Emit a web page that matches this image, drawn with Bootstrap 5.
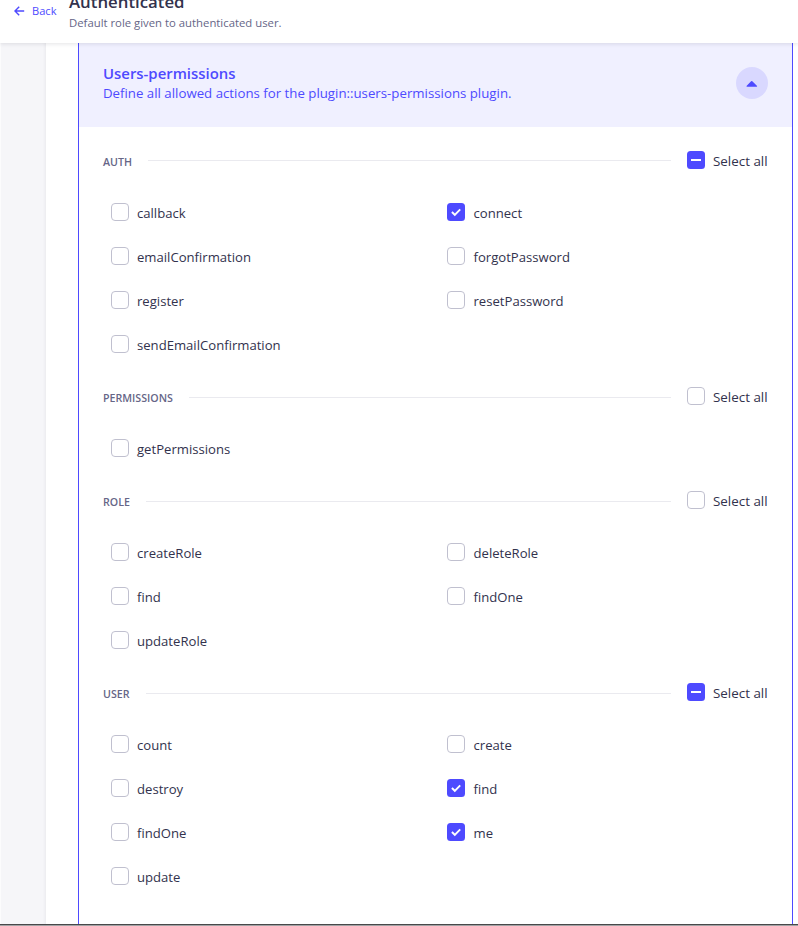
<!DOCTYPE html>
<html lang="en">
<head>
<meta charset="utf-8">
<meta name="viewport" content="width=device-width, initial-scale=1">
<title>Authenticated role</title>
<link href="https://cdn.jsdelivr.net/npm/bootstrap@5.3.0/dist/css/bootstrap.min.css" rel="stylesheet">
<style>
  :root { --brand: #4e4aff; --ink: #32324d; --muted-ink: #666687; }
  body { font-family: "Open Sans", "Noto Sans", sans-serif; color: var(--ink); font-size: 13.12px; line-height: 20px; }
  .screen { height: 926px; }
  .top-bar { height: 43px; box-shadow: 0 1px 4px rgba(33,33,52,.12); z-index: 2; padding-left: 14px; }
  .back-link { color: var(--brand); font-size: 11.1px; line-height: 16px; height: 16px; margin-top: 3px; gap: 7px; width: 55px; }
  .page-title { font-size: 16.8px; line-height: 22px; font-weight: 600; margin-top: -9px; margin-bottom: 2px; }
  .subtitle { font-size: 11.34px; line-height: 16px; color: var(--muted-ink); }
  .side-strip { width: 46px; background: #f6f6f9; border-left: 1px solid #fcfcfd; box-shadow: inset -3px 0 3px -2px rgba(33,33,52,.06); }
  .panel { width: 715px; margin-left: 32px; border: solid var(--brand); border-width: 0 1px; }
  .panel-head { height: 84px; background: #f0f0ff; color: var(--brand); padding: 0 24px; }
  .panel-title { font-size: 14.9px; line-height: 20px; font-weight: 600; margin-top: 20px; }
  .panel-text { font-size: 13.25px; line-height: 20px; }
  .toggle-btn { width: 32px; height: 32px; background: #d9d8ff; border: 0; margin-top: 24px; }
  .panel-body { padding: 3px 24px 0; }
  .group-head { height: 60px; }
  .group-name { font-size: 10.65px; font-weight: 600; color: var(--muted-ink); margin: 4px 16px 0 0; }
  .rule { height: 1px; background: #eaeaef; margin-top: 2px; margin-right: 16px; }
  .group-head:first-child .rule { margin-top: 1px; }
  .select-all { width: 81px; font-size: 13.4px; }
  .perm-grid { width: 680px; padding-left: 8px; }
  .perm { height: 44px; width: 336px; }
  .tick { width: 18px; height: 18px; margin-right: 8px; flex: none; }
  .perm-label { padding-top: 2px; }
  .perm:nth-child(even) .perm-label { padding-left: .5px; }
  .foot-line { height: 2px; background: linear-gradient(#48484a 50%, #a2a2a4 50%); }
</style>
<script src="https://cdn.jsdelivr.net/npm/bootstrap@5.3.0/dist/js/bootstrap.bundle.min.js"></script>
</head>
<body class="bg-white">
<svg class="d-none">
  <symbol id="box-off" viewBox="0 0 18 18"><rect x=".5" y=".5" width="17" height="17" rx="3.5" fill="#fff" stroke="#c0c0cf"/></symbol>
  <symbol id="box-on" viewBox="0 0 18 18"><rect width="18" height="18" rx="3.5" fill="#4e4aff"/><path d="M4.9 9 7.8 11.8 13.2 6.3" fill="none" stroke="#fff" stroke-width="1.9"/></symbol>
  <symbol id="box-mixed" viewBox="0 0 18 18"><rect width="18" height="18" rx="3.5" fill="#4e4aff"/><path d="M4 8h10v2H4z" fill="#fff"/></symbol>
</svg>
<div class="screen d-flex flex-column overflow-hidden">
  <header class="top-bar d-flex flex-shrink-0 bg-white position-relative">
    <a class="back-link d-flex align-items-center text-decoration-none" href="#">
      <svg width="11" height="10" viewBox="0 0 11 10" fill="none" stroke="#4e4aff" stroke-width="1.4"><path d="M10.2 5H1.2M5.2.8 1 5l4.2 4.2"/></svg>Back
    </a>
    <div>
      <h1 class="page-title">Authenticated</h1>
      <p class="subtitle mb-0">Default role given to authenticated user.</p>
    </div>
  </header>
  <main class="d-flex flex-grow-1">
    <div class="side-strip flex-shrink-0"></div>
    <section class="panel flex-shrink-0">
      <div class="panel-head d-flex justify-content-between align-items-start">
        <div>
          <h2 class="panel-title mb-0">Users-permissions</h2>
          <p class="panel-text mb-0">Define all allowed actions for the plugin::users-permissions plugin.</p>
        </div>
        <button class="toggle-btn rounded-circle d-flex align-items-center justify-content-center p-0" aria-label="Collapse">
          <svg width="12" height="7" viewBox="0 0 12 7"><path d="M.5 6.1 5.1 1.2q.6-.6 1.2 0l4.8 4.9q.2.6-.5.6H1q-.7 0-.5-.6z" fill="#4e4aff"/></svg>
        </button>
      </div>
      <div class="panel-body" id="groups"></div>
    </section>
  </main>
  <div class="foot-line flex-shrink-0"></div>
</div>
<script>
  const groups = [
    ['AUTH', 'mixed', ['callback', '*connect', 'emailConfirmation', 'forgotPassword', 'register', 'resetPassword', 'sendEmailConfirmation']],
    ['PERMISSIONS', 'off', ['getPermissions']],
    ['ROLE', 'off', ['createRole', 'deleteRole', 'find', 'findOne', 'updateRole']],
    ['USER', 'mixed', ['count', 'create', 'destroy', '*find', 'findOne', '*me', 'update']]
  ];
  const tick = (state) => `<svg class="tick"><use href="#box-${state}"/></svg>`;
  document.getElementById('groups').innerHTML = groups.map(([name, state, perms]) => `
    <div class="group-head d-flex align-items-center">
      <span class="group-name">${name}</span><span class="rule flex-grow-1"></span>
      <span class="select-all d-flex align-items-center">${tick(state)}<span class="perm-label text-nowrap">Select all</span></span>
    </div>
    <div class="perm-grid d-flex flex-wrap">${perms.map(p => `
      <div class="perm d-flex align-items-center">${tick(p[0] === '*' ? 'on' : 'off')}<span class="perm-label">${p.replace('*', '')}</span></div>`).join('')}
    </div>`).join('');
</script>
</body>
</html>
